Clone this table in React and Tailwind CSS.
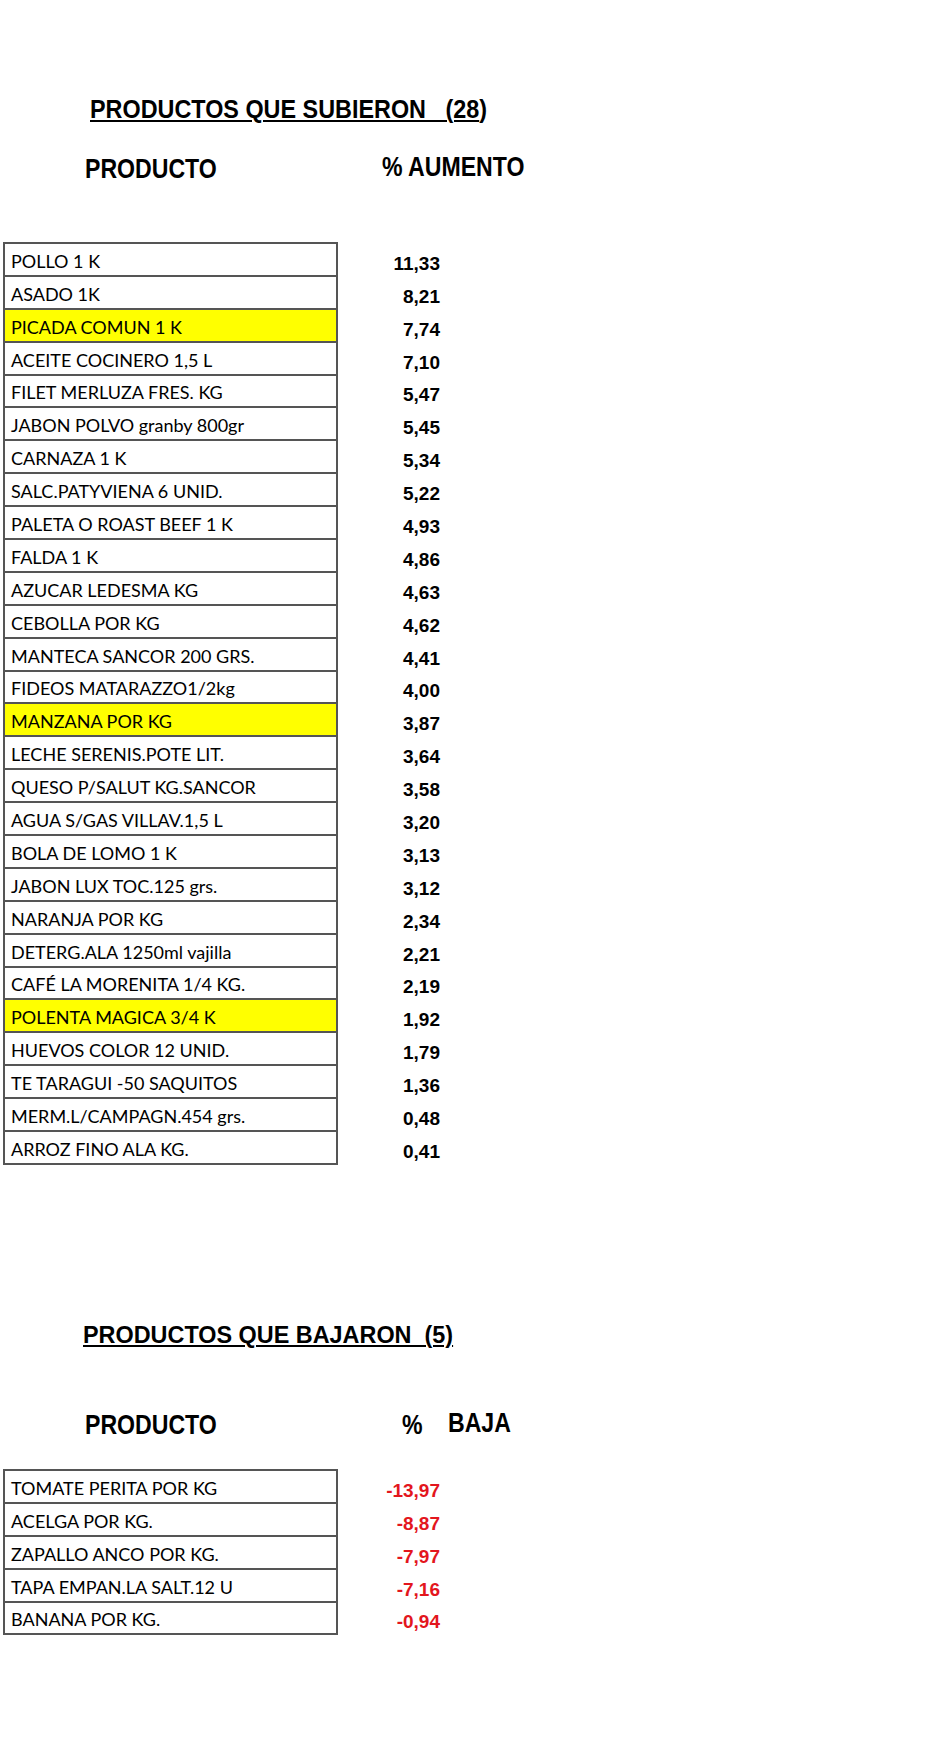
const subieron = [
  ["POLLO 1 K", "11,33"],
  ["ASADO 1K", "8,21"],
  ["PICADA COMUN 1 K", "7,74", true],
  ["ACEITE COCINERO 1,5 L", "7,10"],
  ["FILET MERLUZA FRES. KG", "5,47"],
  ["JABON POLVO granby 800gr", "5,45"],
  ["CARNAZA 1 K", "5,34"],
  ["SALC.PATYVIENA 6 UNID.", "5,22"],
  ["PALETA O ROAST BEEF 1 K", "4,93"],
  ["FALDA 1 K", "4,86"],
  ["AZUCAR LEDESMA KG", "4,63"],
  ["CEBOLLA POR KG", "4,62"],
  ["MANTECA SANCOR 200 GRS.", "4,41"],
  ["FIDEOS MATARAZZO1/2kg", "4,00"],
  ["MANZANA POR KG", "3,87", true],
  ["LECHE SERENIS.POTE LIT.", "3,64"],
  ["QUESO P/SALUT KG.SANCOR", "3,58"],
  ["AGUA S/GAS VILLAV.1,5 L", "3,20"],
  ["BOLA DE LOMO 1 K", "3,13"],
  ["JABON LUX TOC.125 grs.", "3,12"],
  ["NARANJA POR KG", "2,34"],
  ["DETERG.ALA 1250ml vajilla", "2,21"],
  ["CAFÉ LA MORENITA 1/4 KG.", "2,19"],
  ["POLENTA MAGICA 3/4 K", "1,92", true],
  ["HUEVOS COLOR 12 UNID.", "1,79"],
  ["TE TARAGUI -50 SAQUITOS", "1,36"],
  ["MERM.L/CAMPAGN.454 grs.", "0,48"],
  ["ARROZ FINO ALA KG.", "0,41"],
];

const bajaron = [
  ["TOMATE PERITA POR KG", "-13,97"],
  ["ACELGA POR KG.", "-8,87"],
  ["ZAPALLO ANCO POR KG.", "-7,97"],
  ["TAPA EMPAN.LA SALT.12 U", "-7,16"],
  ["BANANA POR KG.", "-0,94"],
];

// condensed bold text (Arial Narrow look)
const Narrow = ({ children, className = "scale-x-[0.825]" }) => (
  <span
    className={`inline-block origin-left whitespace-pre font-bold font-['Liberation_Sans',Arial,sans-serif] text-black ${className}`}
  >
    {children}
  </span>
);

const Tabla = ({ rows, red }) => (
  <div className="flex ml-[3px]">
    <div className="w-[335px] border-2 border-[#555]">
      {rows.map(([name, , hl]) => (
        <div
          key={name}
          className={`h-[32.9px] border-b-2 border-[#555] last:border-b-0 last:h-[30.9px] flex items-end pl-[6px] pb-[5px] text-[18px] leading-none text-black font-['Lato',sans-serif] ${hl ? "bg-[#ffff00]" : "bg-white"}`}
        >
          {name}
        </div>
      ))}
    </div>
    <div className="w-[102px] pt-[2px]">
      {rows.map(([name, val]) => (
        <div
          key={name}
          className={`h-[32.9px] flex items-end justify-end pb-[4px] text-[19px] leading-none font-bold font-['Liberation_Sans',Arial,sans-serif] ${red ? "text-[#e3161d]" : "text-black"}`}
        >
          {val}
        </div>
      ))}
    </div>
  </div>
);

export default function App() {
  return (
    <div className="w-[950px] min-h-[1749px] bg-white pt-[95px]">
      <div className="h-[26px] text-[25px] leading-[26px] pl-[90px]">
        <Narrow className="scale-x-[0.935]">
          <span className="underline underline-offset-[2px] decoration-2">PRODUCTOS QUE SUBIERON   (28</span>)
        </Narrow>
      </div>
      <div className="h-[28px] text-[28px] leading-[28px] mt-[32px] flex">
        <div className="w-[382px] pl-[85px]">
          <Narrow>PRODUCTO</Narrow>
        </div>
        <Narrow>% AUMENTO</Narrow>
      </div>
      <div className="mt-[61px]">
        <Tabla rows={subieron} />
      </div>

      <div className="h-[24px] text-[24px] leading-[24px] mt-[157px] pl-[83px]">
        <Narrow className="scale-x-[0.975]">
          <span className="underline underline-offset-[2px] decoration-2">PRODUCTOS QUE BAJARON  (5)</span>
        </Narrow>
      </div>
      <div className="h-[28px] text-[28px] leading-[28px] mt-[63px] flex">
        <div className="w-[402px] pl-[85px]">
          <Narrow>PRODUCTO</Narrow>
        </div>
        <div className="w-[46px]">
          <Narrow>%</Narrow>
        </div>
        <Narrow>BAJA</Narrow>
      </div>
      <div className="mt-[32px]">
        <Tabla rows={bajaron} red />
      </div>
    </div>
  );
}
